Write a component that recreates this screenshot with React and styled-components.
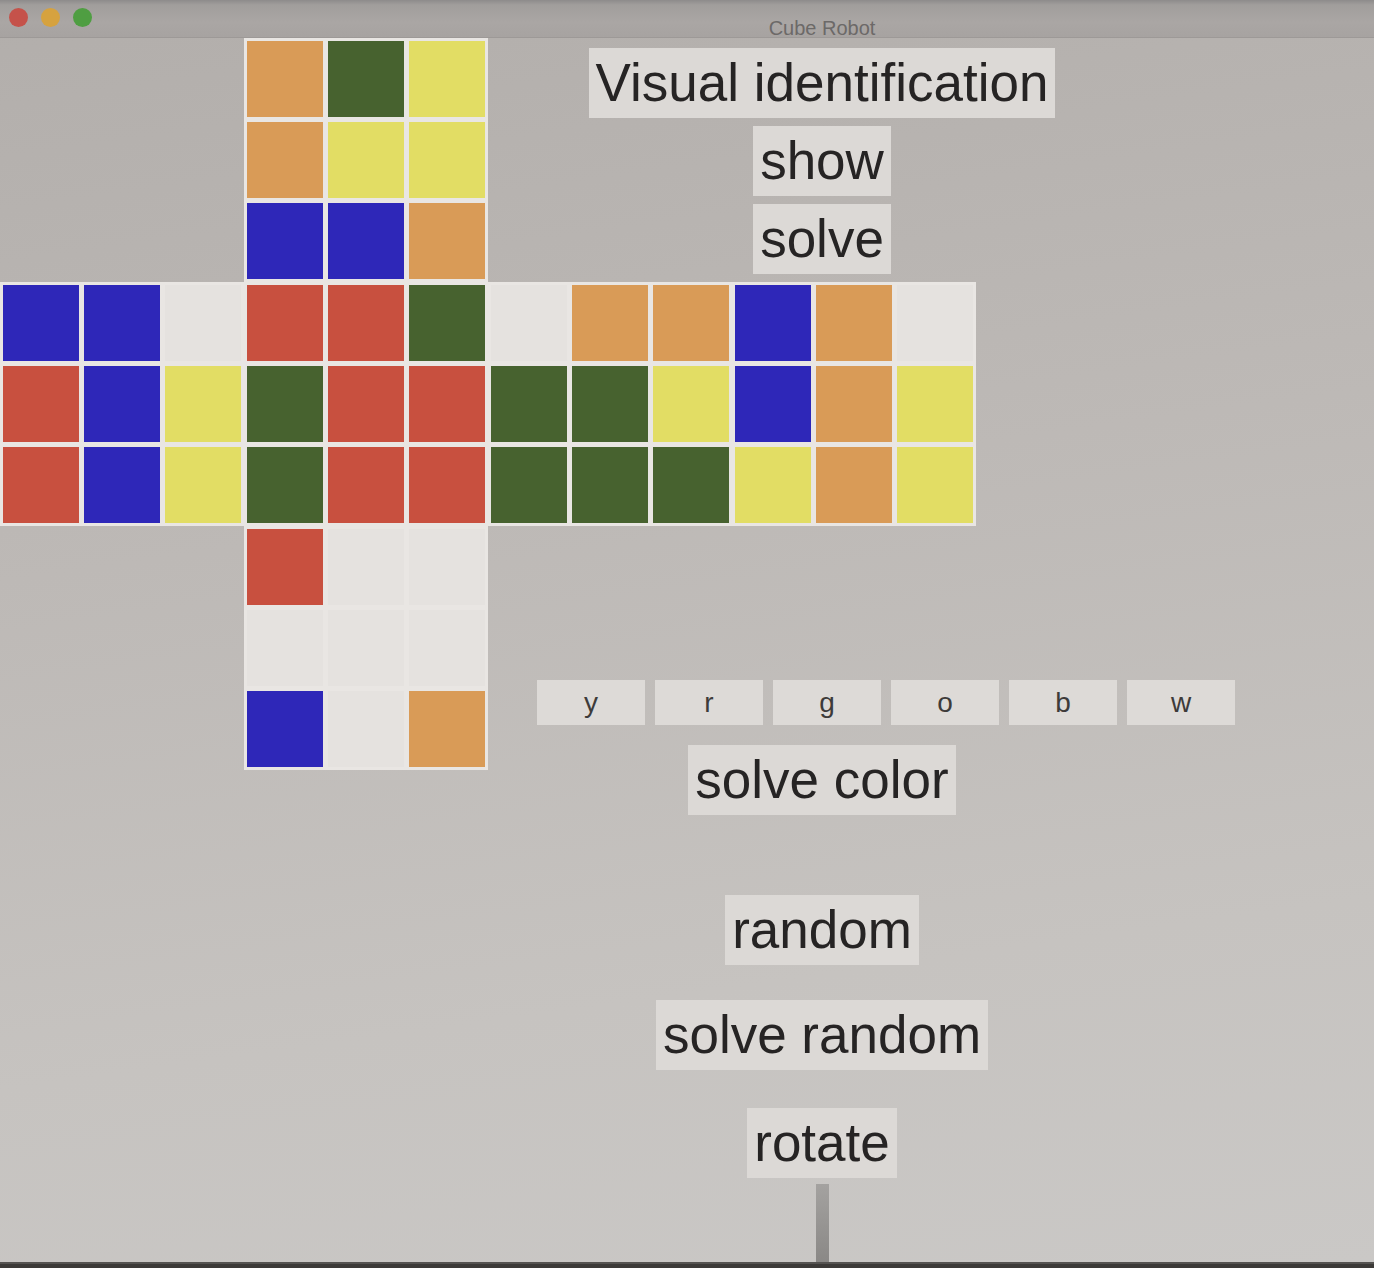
import React from 'react'
import styled, { createGlobalStyle } from 'styled-components'

const STICKER = {
  y: '#e2dd64',
  r: '#c8503f',
  g: '#47622f',
  o: '#d99b57',
  b: '#2e27b8',
  w: '#e5e2df',
}

const faces = {
  up: ['ogy', 'oyy', 'bbo'],
  left: ['bbw', 'rby', 'rby'],
  front: ['rrg', 'grr', 'grr'],
  right: ['woo', 'ggy', 'ggg'],
  back: ['bow', 'boy', 'yoy'],
  down: ['rww', 'www', 'bwo'],
}

const COLUMNS = '244px 244px 668px 1fr'

const GlobalStyle = createGlobalStyle`
  html, body {
    margin: 0;
    padding: 0;
    overflow: hidden;
    background: #3c3a38;
    font-family: "Liberation Sans", Arial, sans-serif;
  }
`

const Window = styled.div`
  display: flex;
  flex-direction: column;
  height: 1262px;
  background: linear-gradient(172deg, #b2aeab 0%, #bdb9b6 40%, #c6c3c0 75%, #cac8c6 100%);
  border-bottom: 2px solid #555351;
`

const TitleBar = styled.header`
  display: grid;
  grid-template-columns: ${COLUMNS};
  height: 38px;
  background: linear-gradient(#8d8b8b 0, #a19e9c 5px, #aaa6a4 60%, #a7a3a1 100%);
  border-bottom: 1px solid #9d9997;
  box-sizing: border-box;
`

const Lights = styled.div`
  display: flex;
  gap: 13px;
  padding: 8px 0 0 9px;
`

const Light = styled.span`
  width: 19px;
  height: 19px;
  border-radius: 50%;
  background: ${p => p.$color};
`

const Title = styled.div`
  grid-column: 3;
  align-self: end;
  margin-bottom: -3px;
  text-align: center;
  font-size: 20px;
  color: #6c6968;
`

const Content = styled.main`
  flex: 1;
  display: grid;
  grid-template-columns: ${COLUMNS};
  grid-template-rows: 244px 244px 244px 1fr;
`

const FaceGrid = styled.div`
  display: grid;
  grid-template-columns: repeat(3, 76px);
  grid-template-rows: repeat(3, 76px);
  gap: 5px;
  padding: 3px;
  background: #e9e6e3;
  grid-column: ${p => p.$col || 'auto'};
  grid-row: ${p => p.$row || 'auto'};
`

const Sticker = styled.div`
  background: ${p => STICKER[p.$c]};
`

const MiddleRow = styled.div`
  grid-column: 1 / 4;
  grid-row: 2;
  display: flex;
`

const TopControls = styled.div`
  grid-column: 3;
  grid-row: 1;
  display: flex;
  flex-direction: column;
  align-items: center;
  gap: 8px;
  padding-top: 10px;
`

const BottomControls = styled.div`
  grid-column: 3;
  grid-row: 3 / 5;
  display: flex;
  flex-direction: column;
  align-items: center;
  padding-top: 154px;
`

const BigButton = styled.button`
  appearance: none;
  border: 0;
  border-radius: 0;
  margin: ${p => p.$mt || 0}px 0 0;
  padding: 4px 7px;
  background: #dcd9d6;
  color: #262424;
  font-family: inherit;
  font-size: 53px;
  line-height: 62px;
  white-space: nowrap;
  cursor: default;
`

const ColorRow = styled.div`
  align-self: flex-start;
  margin-left: 49px;
  display: flex;
  gap: 10px;
`

const ColorButton = styled.button`
  appearance: none;
  border: 0;
  border-radius: 0;
  width: 108px;
  height: 45px;
  padding: 0;
  background: #dddad7;
  color: #3d3b3a;
  font-family: inherit;
  font-size: 28px;
  cursor: default;
`

const Stem = styled.div`
  flex: 1;
  width: 13px;
  margin-top: 6px;
  background: linear-gradient(#a4a2a0, #8a8886);
`

const Face = ({ rows, col, row }) => (
  <FaceGrid $col={col} $row={row}>
    {rows.join('').split('').map((c, i) => (
      <Sticker key={i} $c={c} />
    ))}
  </FaceGrid>
)

export default function App() {
  return (
    <>
      <GlobalStyle />
      <Window>
        <TitleBar>
          <Lights>
            <Light $color="#c5524a" />
            <Light $color="#d6a23f" />
            <Light $color="#4f9e42" />
          </Lights>
          <Title>Cube Robot</Title>
        </TitleBar>
        <Content>
          <Face rows={faces.up} col={2} row={1} />
          <TopControls>
            <BigButton>Visual identification</BigButton>
            <BigButton>show</BigButton>
            <BigButton>solve</BigButton>
          </TopControls>
          <MiddleRow>
            <Face rows={faces.left} />
            <Face rows={faces.front} />
            <Face rows={faces.right} />
            <Face rows={faces.back} />
          </MiddleRow>
          <Face rows={faces.down} col={2} row={3} />
          <BottomControls>
            <ColorRow>
              {['y', 'r', 'g', 'o', 'b', 'w'].map(c => (
                <ColorButton key={c}>{c}</ColorButton>
              ))}
            </ColorRow>
            <BigButton $mt={20}>solve color</BigButton>
            <BigButton $mt={80}>random</BigButton>
            <BigButton $mt={35}>solve random</BigButton>
            <BigButton $mt={38}>rotate</BigButton>
            <Stem />
          </BottomControls>
        </Content>
      </Window>
    </>
  )
}
